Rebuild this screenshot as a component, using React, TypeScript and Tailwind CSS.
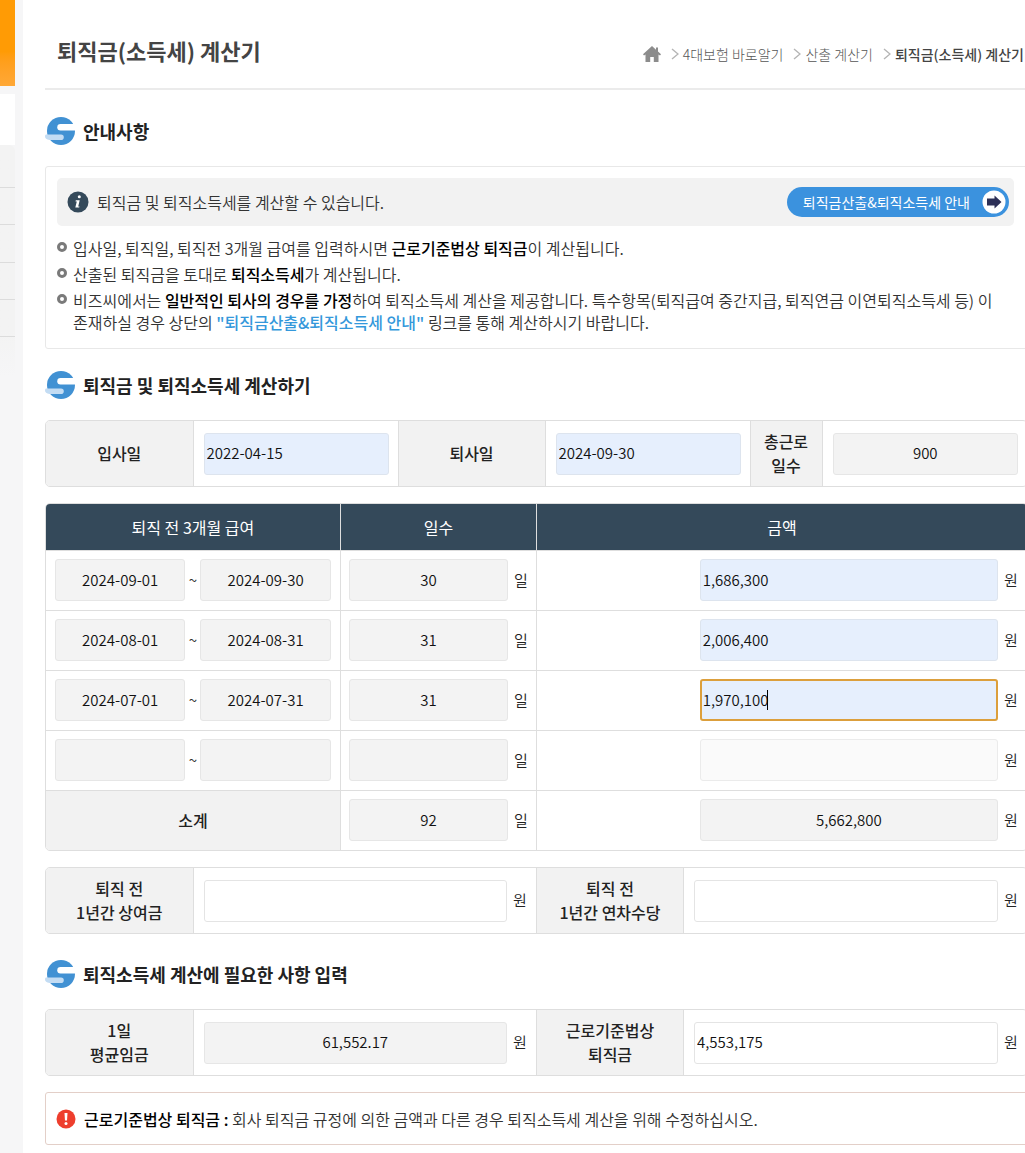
import { useState } from 'react';
import type { ReactNode } from 'react';

interface FieldProps {
  id?: string;
  label?: string;
  value: string;
  kind?: 'filled' | 'readonly' | 'empty' | 'disabled' | 'active';
  className?: string;
}

const KINDS = {
  filled: 'border border-[#dde4ee] bg-[#e6effd] px-[2px]',
  readonly: 'border border-[#e6e6e6] bg-[#f3f3f3] px-1 text-center',
  empty: 'border border-[#e4e4e4] bg-white px-[2px]',
  disabled: 'border border-[#ebebeb] bg-[#fafafa] px-[2px]',
  active: 'border-2 border-[#dc9f3c] bg-[#e6effd] px-px',
};

function Field({ id, label, value, kind = 'readonly', className = 'w-full' }: FieldProps) {
  const [text, setText] = useState(value);
  return (
    <input
      id={id}
      type="text"
      aria-label={label}
      value={text}
      readOnly={kind === 'readonly'}
      disabled={kind === 'disabled'}
      onChange={(e) => setText(e.target.value)}
      className={`h-[42px] min-w-0 rounded-[3px] pb-0.5 text-[15px] font-[350] text-[#111] outline-none ${KINDS[kind]} ${className}`}
    />
  );
}

function Unit({ children }: { children: ReactNode }) {
  return <span className="w-[14px] shrink-0 text-[15px] font-[350] text-[#222]">{children}</span>;
}

function SectionTitle({ children, className }: { children: ReactNode; className: string }) {
  return (
    <h2 className={`mb-[21px] flex h-7 items-center gap-2 text-[18px] font-bold text-[#222] ${className}`}>
      <svg width="30" height="28" viewBox="0 0 30 28" aria-hidden="true">
        <circle cx="16" cy="14" r="14" fill="#4191d3" />
        <path d="M30 7H15.500a3.200 3.200 0 0 0 0 6.500H30z" fill="#fff" />
        <path d="M1 17.500h15a2.800 2.800 0 0 1 0 5.600H4.500Q0 22 0 19.500Q0 17.500 1 17.500z" fill="#c3dcf3" />
      </svg>
      {children}
    </h2>
  );
}

function Panel({ children, className = '' }: { children: ReactNode; className?: string }) {
  return (
    <div className={`overflow-hidden rounded-[5px] border border-[#dedede] ${className}`}>
      <table className="w-full table-fixed border-collapse">{children}</table>
    </div>
  );
}

function LabelCell({ htmlFor, children }: { htmlFor: string; children: ReactNode }) {
  return (
    <th scope="row" className="h-[65px] border-r border-l border-[#dedede] bg-[#f2f2f2] pb-0.5 text-center text-[16px] leading-6 font-medium text-[#222] first:border-l-0">
      <label htmlFor={htmlFor}>{children}</label>
    </th>
  );
}

function Bullet({ children }: { children: ReactNode }) {
  return (
    <li className="flex gap-1.5">
      <span className="mt-[5px] size-2.5 shrink-0 rounded-full border-[3px] border-[#7a7a7a]" />
      <span>{children}</span>
    </li>
  );
}

function Crumb({ children, current = false }: { children: ReactNode; current?: boolean }) {
  return (
    <li className="flex items-center gap-1">
      <svg width="8" height="12" viewBox="0 0 8 12" fill="none" stroke="#b5b5b5" strokeWidth="1.4" aria-hidden="true">
        <path d="M1 1l6 5-6 5" />
      </svg>
      <a href="#" className={current ? 'font-medium text-[#444]' : 'font-light text-[#555]'}>
        {children}
      </a>
    </li>
  );
}

const months = [
  { from: '2024-09-01', to: '2024-09-30', days: '30', pay: '1,686,300', kind: 'filled' },
  { from: '2024-08-01', to: '2024-08-31', days: '31', pay: '2,006,400', kind: 'filled' },
  { from: '2024-07-01', to: '2024-07-31', days: '31', pay: '1,970,100', kind: 'active' },
  { from: '', to: '', days: '', pay: '', kind: 'disabled' },
] as const;

function Sidebar() {
  return (
    <aside className="w-[23px] shrink-0 bg-[#f6f6f7]">
      <div className="w-[15px]">
        <div className="h-[86px] bg-linear-to-b from-[#ff9b05] from-60% to-[#ffa836]" />
        <div className="mt-2 h-[51px] bg-white" />
        <ul className="rounded-tr-md bg-linear-to-b from-[#f3f3f3] from-80% to-[#f6f6f7] pb-10">
          <li className="h-[43px] border-b border-[#dcdcdc]" />
          <li className="h-[37px] border-b border-[#dcdcdc]" />
          <li className="h-[38px] border-b border-[#dcdcdc]" />
          <li className="h-[37px] border-b border-[#dcdcdc]" />
          <li className="h-[37px] border-b border-[#dcdcdc]" />
        </ul>
      </div>
    </aside>
  );
}

export default function App() {
  return (
    <div className="flex min-h-screen overflow-hidden bg-white font-['Noto_Sans_CJK_KR',sans-serif] text-[#333]">
      <Sidebar />
      <main className="-mr-[3px] ml-[22px] min-w-0 flex-1 pb-2">
        <header className="flex h-[90px] items-center justify-between border-b-2 border-[#ebebeb] pt-3 pr-1 pl-3">
          <h1 className="text-[22px] font-bold text-[#444]">퇴직금(소득세) 계산기</h1>
          <nav aria-label="breadcrumb">
            <ol className="flex items-center gap-2.5 pt-2 text-[14px] whitespace-nowrap">
              <li>
                <a href="#" aria-label="홈">
                  <svg width="18" height="16" viewBox="0 0 18 16" fill="#8c8c8c" aria-hidden="true">
                    <path d="M9 0L0 8.200l1 1.200 1.500-1V16h4.700v-5h3.600v5h4.700V8.400l1.500 1 1-1.200-3-2.700V1.500h-2v2.200z" />
                  </svg>
                </a>
              </li>
              <Crumb>4대보험 바로알기</Crumb>
              <Crumb>산출 계산기</Crumb>
              <Crumb current>퇴직금(소득세) 계산기</Crumb>
            </ol>
          </nav>
        </header>

        <SectionTitle className="mt-[27px]">안내사항</SectionTitle>
        <section className="rounded-[3px] border border-[#e8e8e8] pt-[11px] pr-[13px] pb-[15px] pl-[11px] text-[16px] leading-[22px] font-[350]">
          <div className="mb-[11px] flex h-12 items-center rounded-[5px] bg-[#f2f2f2] pr-[5px] pl-2.5">
            <svg width="22" height="22" viewBox="0 0 22 22" className="mr-2" aria-hidden="true">
              <circle cx="11" cy="11" r="10.500" fill="#34495a" />
              <circle cx="12.300" cy="5.800" r="1.500" fill="#fff" />
              <path d="M8.800 9.200h3.900l-1.500 6.200h1.300l-.3 1.200H8.300l1.500-6.200H8.500z" fill="#fff" />
            </svg>
            <p>퇴직금 및 퇴직소득세를 계산할 수 있습니다.</p>
            <a href="#" className="ml-auto flex h-[30px] items-center gap-3 rounded-full bg-[#3b92de] pr-[3px] pl-4 text-[14px] font-normal text-white">
              퇴직금산출&amp;퇴직소득세 안내
              <svg width="24" height="24" viewBox="0 0 24 24" aria-hidden="true">
                <circle cx="12" cy="12" r="11.500" fill="#fff" />
                <path d="M5 8.500h7.500V5.500L19.500 12l-7 6.500v-3H5z" fill="#2d3057" />
              </svg>
            </a>
          </div>
          <ul className="flex flex-col gap-1">
            <Bullet>
              입사일, 퇴직일, 퇴직전 3개월 급여를 입력하시면 <b className="font-medium text-black">근로기준법상 퇴직금</b>이 계산됩니다.
            </Bullet>
            <Bullet>
              산출된 퇴직금을 토대로 <b className="font-medium text-black">퇴직소득세</b>가 계산됩니다.
            </Bullet>
            <Bullet>
              비즈씨에서는 <b className="font-medium text-black">일반적인 퇴사의 경우를 가정</b>하여 퇴직소득세 계산을 제공합니다. 특수항목(퇴직급여 중간지급, 퇴직연금 이연퇴직소득세 등) 이
              <br />
              존재하실 경우 상단의 <a href="#" className="font-medium text-[#3498db]">"퇴직금산출&amp;퇴직소득세 안내"</a> 링크를 통해 계산하시기 바랍니다.
            </Bullet>
          </ul>
        </section>

        <SectionTitle className="mt-[22px]">퇴직금 및 퇴직소득세 계산하기</SectionTitle>
        <Panel>
          <colgroup>
            <col className="w-[147px]" />
            <col />
            <col className="w-[147px]" />
            <col />
            <col className="w-[72px]" />
            <col />
          </colgroup>
          <tbody>
            <tr>
              <LabelCell htmlFor="hired">입사일</LabelCell>
              <td className="px-[9px] pl-2.5"><Field id="hired" value="2022-04-15" kind="filled" /></td>
              <LabelCell htmlFor="left">퇴사일</LabelCell>
              <td className="px-[9px] pl-2.5"><Field id="left" value="2024-09-30" kind="filled" /></td>
              <LabelCell htmlFor="total-days">총근로<br />일수</LabelCell>
              <td className="px-[9px] pl-2.5"><Field id="total-days" value="900" /></td>
            </tr>
          </tbody>
        </Panel>

        <Panel className="mt-4">
          <colgroup>
            <col className="w-[30%]" />
            <col className="w-[20%]" />
            <col className="w-[50%]" />
          </colgroup>
          <thead>
            <tr className="h-[46px] bg-[#34495a] text-[16px] text-white">
              <th scope="col" className="font-normal">퇴직 전 3개월 급여</th>
              <th scope="col" className="border-l border-[#dedede] font-normal">일수</th>
              <th scope="col" className="border-l border-[#dedede] font-normal">금액</th>
            </tr>
          </thead>
          <tbody>
            {months.map((m, i) => (
              <tr key={i} className="h-[60px] border-t border-[#dedede]">
                <td className="px-[9px]">
                  <div className="flex items-center">
                    <Field label="시작일" value={m.from} className="flex-1" />
                    <span className="w-[15px] text-center text-[15px]">~</span>
                    <Field label="종료일" value={m.to} className="flex-1" />
                  </div>
                </td>
                <td className="border-l border-[#dedede] px-2">
                  <div className="flex items-center gap-1.5">
                    <Field label="일수" value={m.days} className="flex-1" />
                    <Unit>일</Unit>
                  </div>
                </td>
                <td className="border-l border-[#dedede] pr-[9px]">
                  <div className="flex items-center justify-end gap-1.5">
                    <div className="relative w-[62%]">
                      <Field label="금액" value={m.pay} kind={m.kind} />
                      {m.kind === 'active' && <span className="absolute top-[11px] left-[67px] h-5 w-px bg-black" />}
                    </div>
                    <Unit>원</Unit>
                  </div>
                </td>
              </tr>
            ))}
            <tr className="h-[60px] border-t border-[#dedede]">
              <th scope="row" className="bg-[#f2f2f2] text-[16px] font-medium text-[#222]">소계</th>
              <td className="border-l border-[#dedede] px-2">
                <div className="flex items-center gap-1.5">
                  <Field label="일수 소계" value="92" className="flex-1" />
                  <Unit>일</Unit>
                </div>
              </td>
              <td className="border-l border-[#dedede] pr-[9px]">
                <div className="flex items-center justify-end gap-1.5">
                  <Field label="금액 소계" value="5,662,800" className="w-[62%]" />
                  <Unit>원</Unit>
                </div>
              </td>
            </tr>
          </tbody>
        </Panel>

        <Panel className="mt-4">
          <colgroup>
            <col className="w-[147px]" />
            <col />
            <col className="w-[147px]" />
            <col />
          </colgroup>
          <tbody>
            <tr>
              <LabelCell htmlFor="bonus">퇴직 전<br />1년간 상여금</LabelCell>
              <td className="pr-[9px] pl-2.5">
                <div className="flex items-center gap-1.5"><Field id="bonus" value="" kind="empty" className="flex-1" /><Unit>원</Unit></div>
              </td>
              <LabelCell htmlFor="leave-pay">퇴직 전<br />1년간 연차수당</LabelCell>
              <td className="pr-[9px] pl-2.5">
                <div className="flex items-center gap-1.5"><Field id="leave-pay" value="" kind="empty" className="flex-1" /><Unit>원</Unit></div>
              </td>
            </tr>
          </tbody>
        </Panel>

        <SectionTitle className="mt-[26px]">퇴직소득세 계산에 필요한 사항 입력</SectionTitle>
        <Panel>
          <colgroup>
            <col className="w-[147px]" />
            <col />
            <col className="w-[147px]" />
            <col />
          </colgroup>
          <tbody>
            <tr>
              <LabelCell htmlFor="daily-wage">1일<br />평균임금</LabelCell>
              <td className="pr-[9px] pl-2.5">
                <div className="flex items-center gap-1.5"><Field id="daily-wage" value="61,552.17" className="flex-1" /><Unit>원</Unit></div>
              </td>
              <LabelCell htmlFor="severance">근로기준법상<br />퇴직금</LabelCell>
              <td className="pr-[9px] pl-2.5">
                <div className="flex items-center gap-1.5"><Field id="severance" value="4,553,175" kind="empty" className="flex-1" /><Unit>원</Unit></div>
              </td>
            </tr>
          </tbody>
        </Panel>

        <div className="mt-4 flex h-[53px] items-center gap-2 rounded-[3px] border border-[#e3cfc8] pl-2.5 text-[16px] font-[350]">
          <svg width="20" height="20" viewBox="0 0 20 20" aria-hidden="true">
            <circle cx="10" cy="10" r="9.500" fill="#ee3e2d" />
            <path d="M8.500 4h3l-.5 7.500H9z" fill="#fff" />
            <circle cx="10" cy="14.500" r="1.500" fill="#fff" />
          </svg>
          <p>
            <b className="font-medium text-black">근로기준법상 퇴직금 :</b> 회사 퇴직금 규정에 의한 금액과 다른 경우 퇴직소득세 계산을 위해 수정하십시오.
          </p>
        </div>
      </main>
    </div>
  );
}
